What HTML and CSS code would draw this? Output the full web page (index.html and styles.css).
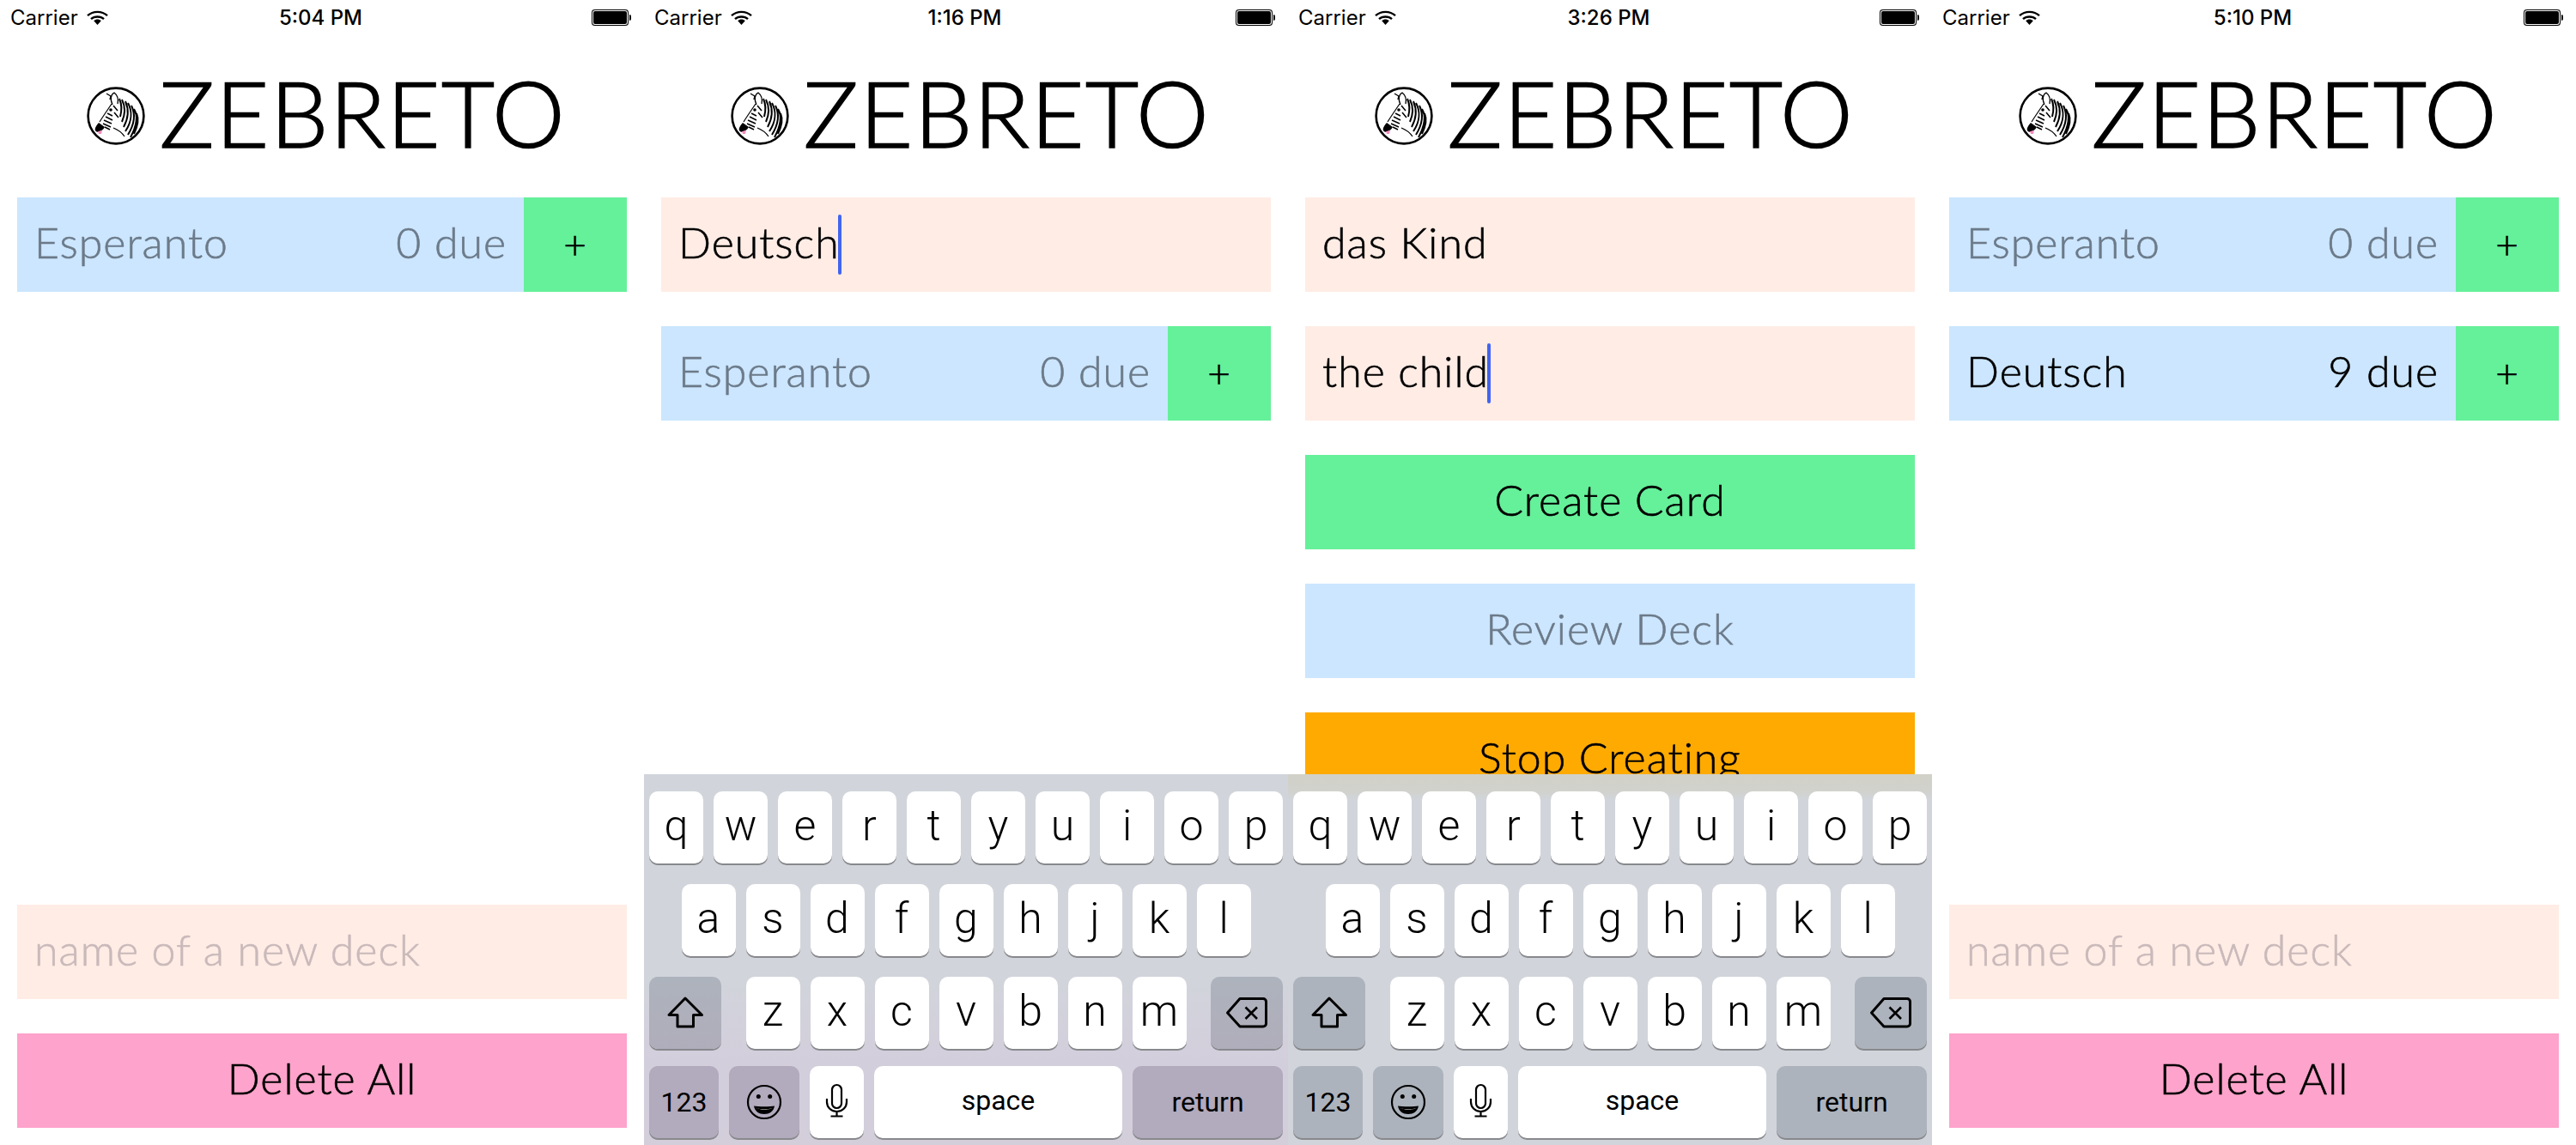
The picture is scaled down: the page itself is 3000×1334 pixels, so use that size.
FILE: index.html
```html
<!DOCTYPE html>
<html lang="en">
<head>
<meta charset="utf-8">
<title>Zebreto</title>
<link rel="stylesheet" href="styles.css">
</head>
<body>
<svg class="defs" aria-hidden="true">
  <symbol id="zebra" viewBox="0 0 68 68">
    <circle cx="34" cy="34" r="32.4" fill="#fff" stroke="#000" stroke-width="2.6"/>
    <path d="M30 21C27 15 28 9 32 7C36 10 37 15 36 20" fill="#fff" stroke="#000" stroke-width="1.3"/>
    <path d="M23 8L28 11L27 15" fill="none" stroke="#000" stroke-width="1.4"/>
    <path d="M29 20C25 26 20 33 15 41" fill="none" stroke="#000" stroke-width="1.2"/>
    <path d="M14 42C11 45 9 49 10 51C11 53 13 53 15 52C18 51 20 49 21 47Z" fill="#000"/>
    <path d="M13 52L18 51L17 55L14 55Z" fill="#f48cc0"/>
    <circle cx="28" cy="27" r="1.800" fill="#000"/>
    <path d="M24 31L30 34M22 35L30 39M20 39L29 43M19 43L28 47M21 47L27 50" fill="none" stroke="#000" stroke-width="1.500"/>
    <path d="M31 22L36 28M32 30L37 36" fill="none" stroke="#000" stroke-width="1.500"/>
    <path d="M38 14C41 21 41 28 39 35M41 15C45 23 45 32 41 41M45 17C49 26 49 36 43 47M48 19C53 28 53 40 45 52M52 22C57 32 56 43 48 56M55 26C60 34 59 44 51 59M58 31C61 38 60 45 55 55" fill="none" stroke="#000" stroke-width="2"/>
    <path d="M31 48C36 50 40 52 44 58" fill="none" stroke="#000" stroke-width="1.3"/>
  </symbol>
  <symbol id="wifi" viewBox="0 0 25 17">
    <path d="M1 6.2C7.3 .4 17.7 .4 24 6.2" fill="none" stroke="#000" stroke-width="2.4"/>
    <path d="M5 10.2C9 6.6 16 6.6 20 10.2" fill="none" stroke="#000" stroke-width="2.4"/>
    <path d="M8.2 12.2C10.8 10 14.2 10 16.800 12.200L12.500 17Z" fill="#000"/>
  </symbol>
  <symbol id="shift" viewBox="0 0 84 84">
    <path d="M42 25L23 44.500H33V58H51.500V44.500H61.500Z" fill="none" stroke="#000" stroke-width="3" stroke-linejoin="round"/>
  </symbol>
  <symbol id="delete" viewBox="0 0 84 84">
    <path d="M34 25.500H61C63 25.500 64.500 27 64.500 29V54.500C64.500 56.500 63 58 61 58H34L19.500 42Z" fill="none" stroke="#000" stroke-width="3" stroke-linejoin="round"/>
    <path d="M40.500 35.500L54 49M54 35.500L40.500 49" fill="none" stroke="#000" stroke-width="2.600"/>
  </symbol>
  <symbol id="emoji" viewBox="0 0 82 84">
    <circle cx="41" cy="42" r="19" fill="none" stroke="#000" stroke-width="2.200"/>
    <circle cx="34.300" cy="35.500" r="2.500" fill="#000"/>
    <circle cx="47.700" cy="35.500" r="2.500" fill="#000"/>
    <path d="M29 46.500C33 47.500 49 47.500 53 46.500C52 53 47 56 41 56C35 56 30 53 29 46.500Z" fill="#000"/>
    <path d="M32 49.500C37 50.300 45 50.300 50 49.500C48 50.800 34 50.800 32 49.500Z" fill="#fff"/>
  </symbol>
  <symbol id="mic" viewBox="0 0 63 84">
    <rect x="26" y="24" width="11" height="27" rx="5.500" fill="none" stroke="#000" stroke-width="2.200"/>
    <path d="M20 40V44C20 50 25 55 31.500 55C38 55 43 50 43 44V40M31.500 55V60M24.500 60.500H38.500" fill="none" stroke="#000" stroke-width="2.200"/>
  </symbol>
</svg>

<main class="screens">

  <section class="phone">
    <header class="status">
      <div class="carrier"><span>Carrier</span><svg class="wifi"><use href="#wifi"/></svg></div>
      <div class="time">5:04 PM</div>
      <div class="battery"><span class="battery-body"></span><span class="battery-tip"></span></div>
    </header>
    <div class="brand"><svg class="logo"><use href="#zebra"/></svg><h1 class="title">ZEBRETO</h1></div>
    <div class="stack">
      <div class="deck"><div class="deck-main muted"><span>Esperanto</span><span>0 due</span></div><div class="plus">+</div></div>
    </div>
    <div class="stack bottom">
      <div class="field placeholder">name of a new deck</div>
      <div class="button pink">Delete All</div>
    </div>
  </section>

  <section class="phone">
    <header class="status">
      <div class="carrier"><span>Carrier</span><svg class="wifi"><use href="#wifi"/></svg></div>
      <div class="time">1:16 PM</div>
      <div class="battery"><span class="battery-body"></span><span class="battery-tip"></span></div>
    </header>
    <div class="brand"><svg class="logo"><use href="#zebra"/></svg><h1 class="title">ZEBRETO</h1></div>
    <div class="stack">
      <div class="field"><span>Deutsch</span><i class="caret"></i></div>
      <div class="deck"><div class="deck-main muted"><span>Esperanto</span><span>0 due</span></div><div class="plus">+</div></div>
    </div>
    <div class="keyboard kb-pink">
      <div class="kb-row">
        <div class="key">q</div><div class="key">w</div><div class="key">e</div><div class="key">r</div><div class="key">t</div><div class="key">y</div><div class="key">u</div><div class="key">i</div><div class="key">o</div><div class="key">p</div>
      </div>
      <div class="kb-row">
        <div class="key">a</div><div class="key">s</div><div class="key">d</div><div class="key">f</div><div class="key">g</div><div class="key">h</div><div class="key">j</div><div class="key">k</div><div class="key">l</div>
      </div>
      <div class="kb-row kb-row-shift">
        <div class="key dark wide"><svg class="icon"><use href="#shift"/></svg></div>
        <div class="letters">
          <div class="key">z</div><div class="key">x</div><div class="key">c</div><div class="key">v</div><div class="key">b</div><div class="key">n</div><div class="key">m</div>
        </div>
        <div class="key dark wide"><svg class="icon"><use href="#delete"/></svg></div>
      </div>
      <div class="kb-row kb-row-last">
        <div class="key dark low nums small">123</div>
        <div class="key dark low emoji"><svg class="icon"><use href="#emoji"/></svg></div>
        <div class="key"><svg class="icon"><use href="#mic"/></svg></div>
        <div class="key space small">space</div>
        <div class="key dark low return small">return</div>
      </div>
    </div>
  </section>

  <section class="phone">
    <header class="status">
      <div class="carrier"><span>Carrier</span><svg class="wifi"><use href="#wifi"/></svg></div>
      <div class="time">3:26 PM</div>
      <div class="battery"><span class="battery-body"></span><span class="battery-tip"></span></div>
    </header>
    <div class="brand"><svg class="logo"><use href="#zebra"/></svg><h1 class="title">ZEBRETO</h1></div>
    <div class="stack">
      <div class="field"><span>das Kind</span></div>
      <div class="field"><span>the child</span><i class="caret"></i></div>
      <div class="button green">Create Card</div>
      <div class="button blue muted">Review Deck</div>
      <div class="button orange">Stop Creating</div>
    </div>
    <div class="keyboard kb-plain">
      <div class="kb-row">
        <div class="key">q</div><div class="key">w</div><div class="key">e</div><div class="key">r</div><div class="key">t</div><div class="key">y</div><div class="key">u</div><div class="key">i</div><div class="key">o</div><div class="key">p</div>
      </div>
      <div class="kb-row">
        <div class="key">a</div><div class="key">s</div><div class="key">d</div><div class="key">f</div><div class="key">g</div><div class="key">h</div><div class="key">j</div><div class="key">k</div><div class="key">l</div>
      </div>
      <div class="kb-row kb-row-shift">
        <div class="key dark wide"><svg class="icon"><use href="#shift"/></svg></div>
        <div class="letters">
          <div class="key">z</div><div class="key">x</div><div class="key">c</div><div class="key">v</div><div class="key">b</div><div class="key">n</div><div class="key">m</div>
        </div>
        <div class="key dark wide"><svg class="icon"><use href="#delete"/></svg></div>
      </div>
      <div class="kb-row kb-row-last">
        <div class="key dark low nums small">123</div>
        <div class="key dark low emoji"><svg class="icon"><use href="#emoji"/></svg></div>
        <div class="key"><svg class="icon"><use href="#mic"/></svg></div>
        <div class="key space small">space</div>
        <div class="key dark low return small">return</div>
      </div>
    </div>
  </section>

  <section class="phone">
    <header class="status">
      <div class="carrier"><span>Carrier</span><svg class="wifi"><use href="#wifi"/></svg></div>
      <div class="time">5:10 PM</div>
      <div class="battery"><span class="battery-body"></span><span class="battery-tip"></span></div>
    </header>
    <div class="brand"><svg class="logo"><use href="#zebra"/></svg><h1 class="title">ZEBRETO</h1></div>
    <div class="stack">
      <div class="deck"><div class="deck-main muted"><span>Esperanto</span><span>0 due</span></div><div class="plus">+</div></div>
      <div class="deck"><div class="deck-main"><span>Deutsch</span><span>9 due</span></div><div class="plus">+</div></div>
    </div>
    <div class="stack bottom">
      <div class="field placeholder">name of a new deck</div>
      <div class="button pink">Delete All</div>
    </div>
  </section>

</main>
</body>
</html>
```
FILE: styles.css
```css
* { box-sizing: border-box; }
html, body { margin: 0; padding: 0; background: #fff; }
body { width: 3000px; height: 1334px; overflow: hidden; font-family: "Lato", "Liberation Sans", sans-serif; color: #000; }
.defs { display: none; }

.screens { display: flex; width: 3000px; height: 1334px; }
.phone { position: relative; display: flex; flex-direction: column; width: 750px; height: 1334px; overflow: hidden; padding-bottom: 20px; }

.status { position: relative; display: flex; align-items: center; justify-content: space-between; height: 40px; padding: 0 15px 0 12px; font-family: "Inter", "Roboto", sans-serif; font-size: 24px; }
.carrier { display: flex; align-items: center; gap: 10px; width: 200px; }
.wifi { width: 25px; height: 17px; }
.time { font-weight: 500; font-size: 24px; }
.battery { display: flex; align-items: center; justify-content: flex-end; width: 200px; }
.battery-body { width: 43px; height: 19px; border-radius: 4px; background: #000; box-shadow: inset 0 0 0 1px #000, inset 0 0 0 2px #fff; }
.battery-tip { width: 2px; height: 7px; background: #000; border-radius: 0 2px 2px 0; margin-left: 1px; }

.brand { display: flex; align-items: center; justify-content: center; gap: 17px; height: 190px; padding: 0 0 10px 10px; }
.logo { width: 68px; height: 68px; margin-top: 9px; }
.title { margin: 0; font-size: 107px; font-weight: 300; line-height: 1; letter-spacing: 1.5px; -webkit-text-stroke: 1.6px #000; }

.stack { display: flex; flex-direction: column; gap: 40px; padding: 0 20px; }
.bottom { margin-top: auto; }

.deck { display: flex; height: 110px; font-size: 50px; font-weight: 300; letter-spacing: 1px; -webkit-text-stroke: .6px currentColor; }
.deck-main { flex: 1; display: flex; align-items: center; justify-content: space-between; padding: 0 20px 6px; background: #cbe6fe; }
.muted { color: #6c7a89; }
.plus { display: flex; align-items: center; justify-content: center; width: 120px; padding-bottom: 4px; background: #65f09a; color: #000; font-size: 46px; font-weight: 300; }

.field { display: flex; align-items: center; height: 110px; padding: 0 20px 6px; background: #ffece5; font-size: 50px; font-weight: 300; letter-spacing: 1px; -webkit-text-stroke: .6px currentColor; }
.placeholder { color: #c9b9ba; }
.caret { width: 4px; height: 70px; margin-left: -2px; margin-top: 6px; border-radius: 2px; background: #4264ef; }

.button { display: flex; align-items: center; justify-content: center; height: 110px; padding-bottom: 6px; font-size: 50px; font-weight: 300; letter-spacing: 1px; -webkit-text-stroke: .6px currentColor; }
.pink { background: #fea3cb; }
.green { background: #65f09a; }
.blue { background: #cbe6fe; }
.orange { background: #ffaa00; }

.keyboard { position: absolute; left: 0; right: 0; bottom: 0; display: flex; flex-direction: column; gap: 24px; height: 432px; padding: 20px 6px 0; font-family: "Roboto", "Inter", sans-serif; }
.kb-pink { background: linear-gradient(180deg, #d1d5db 0%, #d1d5db 52%, #d3cedc 78%, #d3ceda 100%); }
.kb-plain { background: linear-gradient(180deg, #d1d1c8 0, #d1d2cd 20px, #d1d5db 30px, #d1d5db 100%); }

.kb-row { display: flex; justify-content: center; gap: 12px; }
.kb-row-shift { justify-content: space-between; }
.kb-row-last { justify-content: flex-start; margin-top: -4px; }
.letters { display: flex; gap: 12px; }

.key { display: flex; align-items: center; justify-content: center; flex: none; width: 63px; height: 84px; padding-bottom: 4px; border-radius: 10px; background: #fff; box-shadow: 0 2px 0 #88898d; font-size: 50px; font-weight: 300; line-height: 1; }
.small { font-size: 32px; font-weight: 400; }
.dark { background: linear-gradient(180deg, #adb3bc, #b0adbb); padding-bottom: 0; }
.kb-plain .dark, .kb-plain .low { background: #adb3bc; }
.low { background: #b2aabd; }
.wide { width: 84px; }
.nums { width: 81px; }
.emoji { width: 82px; }
.space { width: 289px; background: #fff; }
.return { width: 175px; }
.icon { width: 100%; height: 84px; flex: none; }
```
